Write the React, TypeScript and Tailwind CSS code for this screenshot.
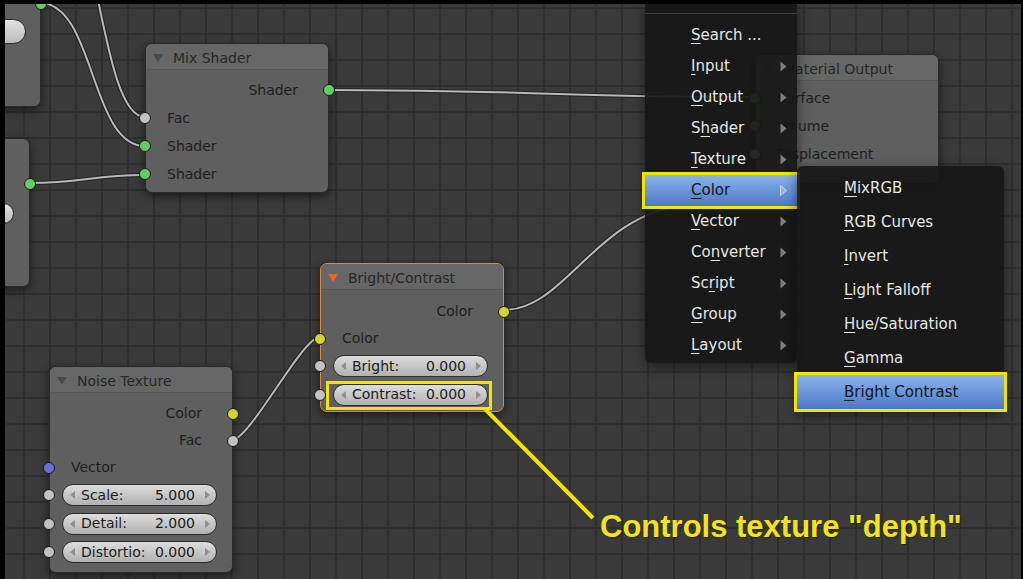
import type { ReactNode } from "react";

const GREEN = "bg-[#63cf63]";
const GREY = "bg-[#c2c2c2]";
const YELLOW = "bg-[#d2d232]";
const BLUE = "bg-[#6b6bdb]";

function Tri({ className }: { className: string }) {
    return (
        <svg width="10" height="8" viewBox="0 0 10 8" className={className}>
            <path d="M0 0 H10 L5 8 Z" fill="currentColor" />
        </svg>
    );
}

function Socket({ side, color }: { side: "l" | "r"; color: string }) {
    return (
        <span
            className={`absolute top-1/2 h-[12px] w-[12px] -translate-y-1/2 rounded-full border border-[#1b1b1b] ${
                side === "l" ? "left-[-7px]" : "right-[-7px]"
            } ${color}`}
        />
    );
}

function Out({ label, color, tall }: { label: string; color: string; tall?: boolean }) {
    return (
        <div className={`relative flex items-center justify-end pr-[30px] ${tall ? "h-[28px]" : "h-[27px]"}`}>
            {label}
            <Socket side="r" color={color} />
        </div>
    );
}

function In({ label, color, tall }: { label: string; color: string; tall?: boolean }) {
    return (
        <div className={`relative flex items-center pl-[21px] ${tall ? "h-[28px]" : "h-[27px]"}`}>
            {label}
            <Socket side="l" color={color} />
        </div>
    );
}

function PillArrow({ right }: { right?: boolean }) {
    return (
        <svg width="5" height="8" viewBox="0 0 5 8" className={right ? "ml-[10px]" : ""}>
            <path d={right ? "M0 0 L5 4 L0 8 Z" : "M5 0 L0 4 L5 8 Z"} fill="#8f8f8f" />
        </svg>
    );
}

function Field({ label, value }: { label: string; value: string }) {
    return (
        <div className="relative flex h-[28.5px] items-center pl-[12px] pr-[15px]">
            <Socket side="l" color={GREY} />
            <div className="flex h-[22px] flex-1 items-center rounded-full border border-[#2b2b2b] bg-linear-to-b from-[#dddddd] to-[#b1b1b1] pl-[7px] pr-[6px] text-[#1c1c1c]">
                <PillArrow />
                <span className="ml-[6px]">{label}</span>
                <span className="ml-auto">{value}</span>
                <PillArrow right />
            </div>
        </div>
    );
}

function Node({
    className,
    title,
    tri,
    children,
}: {
    className: string;
    title: string;
    tri: string;
    children: ReactNode;
}) {
    return (
        <div
            className={`absolute w-[184px] rounded-[7px] border bg-[#5f5f5f] text-[14px] text-[#1e1e1e] shadow-[0_3px_10px_rgba(0,0,0,0.55)] ${className}`}
        >
            <div className="flex h-[26px] items-center rounded-t-[6px] border-b border-[#565656] bg-[#666666] pl-[7px] pt-[3px]">
                <Tri className={tri} />
                <span className="ml-[10px] text-[#282828]">{title}</span>
            </div>
            {children}
        </div>
    );
}

function Label({ text, u }: { text: string; u: number }) {
    return (
        <span>
            {text.slice(0, u)}
            <span className="underline decoration-1 underline-offset-[3px]">{text[u]}</span>
            {text.slice(u + 1)}
        </span>
    );
}

function MenuArrow({ active }: { active?: boolean }) {
    return (
        <svg width="7" height="11" viewBox="0 0 7 11">
            <path
                d="M0.5 0.5 L6.5 5.5 L0.5 10.5 Z"
                fill={active ? "#9fb4d6" : "#7e7e7e"}
                stroke={active ? "#c8d6ee" : "none"}
            />
        </svg>
    );
}

const mainItems: [string, number][] = [
    ["Search ...", 0],
    ["Input", 0],
    ["Output", 0],
    ["Shader", 1],
    ["Texture", 0],
    ["Color", 0],
    ["Vector", 0],
    ["Converter", 2],
    ["Script", 2],
    ["Group", 0],
    ["Layout", 0],
];

const colorItems = ["MixRGB", "RGB Curves", "Invert", "Light Falloff", "Hue/Saturation", "Gamma", "Bright Contrast"];

export default function App() {
    return (
        <div className="flex h-[579px] w-[1023px] overflow-hidden bg-black pl-[5px] pr-[2px] pt-[4px] font-['DejaVu_Sans',sans-serif]">
            <div className="relative flex-1 overflow-hidden bg-[#3a3a3a] bg-[linear-gradient(90deg,#2f2f2f_2px,transparent_2px),linear-gradient(180deg,#2f2f2f_2px,transparent_2px)] bg-size-[26px_26px] bg-position-[18px_3px]">
                {/* links */}
                <svg className="absolute inset-0" width="1016" height="575" fill="none">
                    {[
                        "M35 -1 C90 -1 85 142 140 142",
                        "M91 -14 C105 56 117 113 140 113",
                        "M24 179 C80 179 85 171 140 171",
                        "M323 86 C535 86 535 93 750 93",
                        "M227 436 C245 436 297 333 315 333",
                        "M499 306 C560 306 590 211 680 201",
                    ].map((d) => (
                        <g key={d}>
                            <path d={d} stroke="#222" strokeWidth="4" />
                            <path d={d} stroke="#b9b9b9" strokeWidth="2" />
                        </g>
                    ))}
                </svg>

                {/* partially visible nodes on the left */}
                <div className="absolute left-[-150px] top-[-40px] h-[143px] w-[186px] rounded-[7px] border border-[#2a2a2a] bg-[#5f5f5f] shadow-[0_3px_10px_rgba(0,0,0,0.55)]">
                    <div className="relative mt-[38px] h-[2px]">
                        <Socket side="r" color={GREEN} />
                    </div>
                    <div className="ml-auto mr-[14px] mt-[14px] h-[25px] w-[60px] rounded-full border border-[#2b2b2b] bg-linear-to-b from-[#e2e2e2] to-[#bcbcbc]" />
                </div>
                <div className="absolute left-[-160px] top-[134px] h-[149px] w-[185px] rounded-[7px] border border-[#2a2a2a] bg-[#5f5f5f] shadow-[0_3px_10px_rgba(0,0,0,0.55)]">
                    <div className="relative mt-[36px] h-[18px]">
                        <Socket side="r" color={GREEN} />
                    </div>
                    <div className="ml-auto mr-[15px] mt-[10px] h-[21px] w-[60px] rounded-full border border-[#2b2b2b] bg-linear-to-b from-[#e2e2e2] to-[#bcbcbc]" />
                </div>

                <Node className="left-[140px] top-[39px] border-[#2a2a2a] pb-[4px]" title="Mix Shader" tri="text-[#4a4a4a]">
                    <div className="pt-[6px]">
                        <Out label="Shader" color={GREEN} tall />
                        <In label="Fac" color={GREY} tall />
                        <In label="Shader" color={GREEN} tall />
                        <In label="Shader" color={GREEN} tall />
                    </div>
                </Node>

                <Node className="left-[750px] top-[50px] h-[130px] border-[#2a2a2a]" title="Material Output" tri="text-[#4a4a4a]">
                    <div className="pt-[3px]">
                        <In label="Surface" color={GREEN} tall />
                        <In label="Volume" color={GREEN} tall />
                        <In label="Displacement" color={GREY} tall />
                    </div>
                </Node>

                <Node className="left-[44px] top-[362px] border-[#2a2a2a] pb-[5px]" title="Noise Texture" tri="text-[#4a4a4a]">
                    <div className="pt-[7px]">
                        <Out label="Color" color={YELLOW} />
                        <Out label="Fac" color={GREY} />
                        <In label="Vector" color={BLUE} />
                        <Field label="Scale:" value="5.000" />
                        <Field label="Detail:" value="2.000" />
                        <Field label="Distortio:" value="0.000" />
                    </div>
                </Node>

                <Node className="left-[315px] top-[259px] border-[#d88a3e] pb-[2px]" title="Bright/Contrast" tri="text-[#e8681c]">
                    <div className="pt-[8px]">
                        <Out label="Color" color={YELLOW} />
                        <In label="Color" color={YELLOW} />
                        <Field label="Bright:" value="0.000" />
                        <Field label="Contrast:" value="0.000" />
                    </div>
                </Node>

                {/* add menu */}
                <div className="absolute left-[640px] top-0 w-[152px] rounded-b-[6px] bg-[rgba(22,22,22,0.91)] pb-[2px] text-[15px] text-[#e6e6e6] shadow-[0_4px_12px_rgba(0,0,0,0.5)]">
                    <div className="mb-[6px] mt-[9px] h-px bg-[#3c3c3c]" />
                    {mainItems.map(([t, u], i) => {
                        const active = t === "Color";
                        return (
                            <div
                                key={t}
                                className={`flex h-[31px] items-center pl-[46px] pr-[10px] ${
                                    active
                                        ? "bg-linear-to-b from-[#8cb3ec] to-[#4b79c5] text-[#151515] outline-[3px] outline-[#f2e400]"
                                        : ""
                                }`}
                            >
                                <span className="flex-1">
                                    <Label text={t} u={u} />
                                </span>
                                {i > 0 && <MenuArrow active={active} />}
                            </div>
                        );
                    })}
                </div>

                <div className="absolute left-[792px] top-[162px] w-[207px] rounded-[6px] bg-[rgba(22,22,22,0.91)] pb-[2px] pt-[5px] text-[15px] text-[#e6e6e6] shadow-[0_4px_12px_rgba(0,0,0,0.5)]">
                    {colorItems.map((t) => {
                        const active = t === "Bright Contrast";
                        return (
                            <div
                                key={t}
                                className={`flex h-[34px] items-center pl-[47px] ${
                                    active
                                        ? "bg-linear-to-b from-[#8cb3ec] to-[#4b79c5] text-[#151515] outline-[3px] outline-[#f2e400]"
                                        : ""
                                }`}
                            >
                                <Label text={t} u={0} />
                            </div>
                        );
                    })}
                </div>

                {/* annotation */}
                <div className="absolute left-[321px] top-[377px] h-[29px] w-[166px] border-[3px] border-[#f2e400]" />
                <svg className="absolute inset-0" width="1016" height="575" fill="none">
                    <path d="M480 405 L588 514" stroke="#f2e400" strokeWidth="4" />
                </svg>
                <div className="absolute left-[595px] top-[507px] font-['Liberation_Sans',Arial,sans-serif] text-[31px] font-bold leading-[31px] text-[#f2e41c] [text-shadow:1px_1px_1px_#202020]">
                    Controls texture "depth"
                </div>
            </div>
        </div>
    );
}
